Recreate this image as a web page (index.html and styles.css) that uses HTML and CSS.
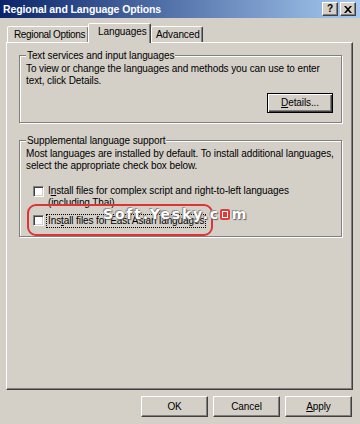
FILE: index.html
```html
<!DOCTYPE html>
<html>
<head>
<meta charset="utf-8">
<link rel="stylesheet" href="styles.css">
</head>
<body>
<div class="window">
  <div class="titlebar">
    <span class="title">Regional and Language Options</span>
    <div class="tbtns">
      <span class="tbtn">?</span>
      <span class="tbtn"><svg width="8" height="7" viewBox="0 0 8 7"><path d="M0 0h2l2 2.2L6 0h2L5 3.5 8 7H6L4 4.8 2 7H0l3-3.5z" fill="#000"/></svg></span>
    </div>
  </div>
  <div class="tabs">
    <div class="tab t1">Regional Options</div>
    <div class="tab t2">Languages</div>
    <div class="tab t3">Advanced</div>
  </div>
  <div class="panel">
    <fieldset class="group g1">
      <legend>Text services and input languages</legend>
      <p>To view or change the languages and methods you can use to enter<br>text, click Details.</p>
      <div class="btnrow"><button class="btn default"><u>D</u>etails...</button></div>
    </fieldset>
    <fieldset class="group g2">
      <legend>Supplemental language support</legend>
      <p>Most languages are installed by default. To install additional languages,<br>select the appropriate check box below.</p>
      <div class="check c1"><span class="box"></span><span class="lbl">I<u>n</u>stall files for complex script and right-to-left languages<br>(including Thai)</span></div>
      <div class="check c2"><span class="box"></span><span class="lbl focus">Ins<u>t</u>all files for East Asian languages</span>
        <span class="ring"></span>
        <span class="mark">Soft.Yesky.c<span class="logo"></span>m</span>
      </div>
    </fieldset>
  </div>
  <div class="footer">
    <button class="btn">OK</button>
    <button class="btn">Cancel</button>
    <button class="btn"><u>A</u>pply</button>
  </div>
</div>
</body>
</html>
```
FILE: styles.css
```css
* { box-sizing: border-box; }
body {
  margin: 0;
  background: #d4d0c8;
  font: 10px/12px "Liberation Sans", Arial, sans-serif;
  letter-spacing: -0.1px;
  color: #000;
}
.window {
  width: 360px;
  height: 424px;
  overflow: hidden;
  background: #d4d0c8;
  white-space: nowrap;
}
.titlebar {
  height: 18px;
  display: flex;
  align-items: center;
  justify-content: space-between;
  padding: 0 4px 0 3px;
  background: linear-gradient(to right, #0a246a, #a6caf0);
}
.title {
  color: #fff;
  font-weight: bold;
  font-size: 10.5px;
  letter-spacing: -0.1px;
}
.tbtns { display: flex; gap: 2px; }
.tbtn {
  width: 16px;
  height: 14px;
  background: #d4d0c8;
  border: 1px solid;
  border-color: #fff #404040 #404040 #fff;
  box-shadow: inset -1px -1px 0 #808080;
  display: flex;
  align-items: center;
  justify-content: center;
  font-weight: bold;
  font-size: 10px;
  line-height: 10px;
}
.tabs {
  display: flex;
  align-items: flex-end;
  height: 19px;
  margin: 5px 0 0 7px;
  position: relative;
  z-index: 1;
}
.tab {
  height: 16px;
  border: 1px solid;
  border-bottom: 0;
  border-color: #fff #404040 transparent #fff;
  border-radius: 2px 2px 0 0;
  box-shadow: inset -1px 0 0 #808080;
  padding-left: 8px;
  line-height: 15px;
  background: #d4d0c8;
  overflow: hidden;
}
.t1 { width: 82px; padding-left: 6px; letter-spacing: -0.35px; }
.t2 {
  width: 63px;
  height: 20px;
  margin: 0 0 -1px -1px;
  padding-left: 9px;
  line-height: 16px;
}
.t3 { width: 52px; padding-left: 4px; }
.panel {
  height: 348px;
  margin: 0 7px 0 6px;
  border: 1px solid;
  border-color: #fff #404040 #404040 #fff;
  box-shadow: inset -1px -1px 0 #808080;
  padding: 0 10px 0 12px;
}
.group {
  margin: 6px 0 0;
  padding: 1px 8px 9px 6px;
  border: 1px solid #808080;
  box-shadow: inset 1px 1px 0 #fff, 1px 1px 0 #fff;
  min-width: 0;
}
.group legend {
  padding: 0 1px;
  line-height: 13px;
  background: #d4d0c8;
}
.group p { margin: 0; }
.g2 { margin-top: 11px; padding-bottom: 8px; }
.btnrow {
  display: flex;
  justify-content: flex-end;
  margin-top: 6px;
}
.btn {
  width: 67px;
  height: 21px;
  padding: 0;
  font: inherit;
  letter-spacing: inherit;
  color: #000;
  background: #d4d0c8;
  border: 1px solid;
  border-color: #fff #404040 #404040 #fff;
  box-shadow: inset -1px -1px 0 #808080;
}
.btn.default {
  width: 66px;
  height: 20px;
  border: 1px solid #000;
  box-shadow: inset 1px 1px 0 #fff, inset -1px -1px 0 #404040, inset -2px -2px 0 #808080;
}
.check {
  display: flex;
  align-items: flex-start;
  margin-left: 7px;
}
.c1 { margin-top: 13px; }
.c2 { margin-top: 5px; position: relative; }
.box {
  width: 11px;
  height: 11px;
  margin-top: 1px;
  margin-right: 4px;
  flex: none;
  background: #fff;
  border: 1px solid;
  border-color: #808080 #fff #fff #808080;
  box-shadow: inset 1px 1px 0 #404040, inset -1px -1px 0 #d4d0c8;
}
.lbl.focus {
  margin-left: -2px;
  padding: 0 1px;
  border: 1px dotted #000;
}
.ring {
  position: absolute;
  left: -6px;
  top: -10px;
  width: 186px;
  height: 32px;
  border: 2px solid #dd3434;
  border-radius: 9px;
}
.mark {
  position: absolute;
  left: 70px;
  top: -7px;
  font: 900 14px/14px "DejaVu Sans", sans-serif;
  letter-spacing: 1.8px;
  color: #fff;
  text-shadow: 0 0 1px #555, 1px 1px 1px #666, -1px -1px 0 #999;
  white-space: nowrap;
}
.logo {
  display: inline-block;
  width: 10px;
  height: 11px;
  margin: 0 2px 0 0;
  vertical-align: -1px;
  background: #e03a3a;
  border-radius: 2px;
  box-shadow: inset 0 0 0 2px #e03a3a, inset 0 0 0 3px #fff;
}
.footer {
  display: flex;
  justify-content: flex-end;
  gap: 5px;
  margin-top: 6px;
  padding-right: 8px;
}
```
